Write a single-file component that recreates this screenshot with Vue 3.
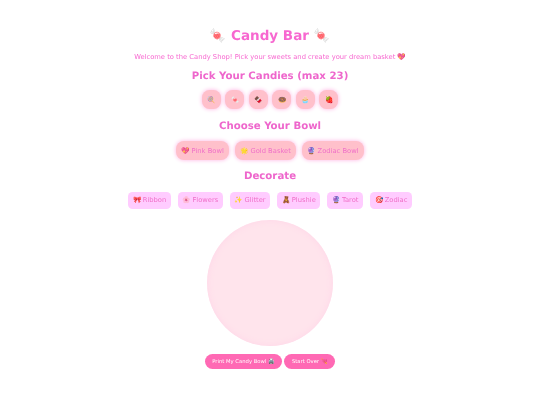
<script setup>
const candies = ['🍭', '🍬', '🍫', '🍩', '🧁', '🍓']
const bowls = ['💖 Pink Bowl', '🌟 Gold Basket', '🔮 Zodiac Bowl']
const decorations = ['🎀 Ribbon', '🌸 Flowers', '✨ Glitter', '🧸 Plushie', '🔮 Tarot', '🎯 Zodiac']
</script>

<template>
  <main class="page">
    <h1 class="title">🍬 Candy Bar 🍬</h1>
    <p class="intro">Welcome to the Candy Shop! Pick your sweets and create your dream basket 💖</p>
    <h2 class="heading">Pick Your Candies (max 23)</h2>
    <div class="candies">
      <button v-for="c in candies" :key="c" class="candy">{{ c }}</button>
    </div>
    <h2 class="heading bowl-heading">Choose Your Bowl</h2>
    <div class="bowls">
      <button v-for="b in bowls" :key="b" class="bowl-btn">{{ b }}</button>
    </div>
    <h2 class="heading deco-heading">Decorate</h2>
    <div class="decos">
      <button v-for="d in decorations" :key="d" class="deco">{{ d }}</button>
    </div>
    <div class="bowl"></div>
    <div class="actions">
      <button class="action">Print My Candy Bowl 🖨️</button>
      <button class="action">Start Over 💘</button>
    </div>
  </main>
</template>

<style>
body { margin: 0; background: #fff; }
</style>

<style scoped>
.page {
  width: 540px;
  height: 405px;
  box-sizing: border-box;
  padding-top: 25.5px;
  display: flex;
  flex-direction: column;
  align-items: center;
  font-family: "DejaVu Sans", sans-serif;
  text-rendering: geometricPrecision;
  filter: blur(0.3px);
  overflow: hidden;
}
.title { margin: 0; font-size: 13.5px; line-height: 20px; font-weight: 700; color: #f768d0; }
.intro { margin: 6px 0 0; font-size: 6.75px; line-height: 10px; color: #f768d0; }
.heading { margin: 8px 0 0; font-size: 10.2px; line-height: 14px; font-weight: 700; color: #ee66cc; }
button { font-family: inherit; border: none; padding: 0; color: #f070c8; }
.candies { display: flex; gap: 4.5px; margin-top: 6.5px; }
.candy {
  width: 19px; height: 19px; border-radius: 7.5px;
  background: #ffc0cb; box-shadow: 0 0 4px #ffb0e2; font-size: 6.75px;
}
.bowl-heading { margin-top: 10.5px; }
.bowls { display: flex; gap: 6px; margin-top: 7.5px; }
.bowl-btn {
  height: 19px; padding: 0 5.25px; border-radius: 8px;
  background: #ffc0cb; box-shadow: 0 0 4px #ffb0e2; font-size: 6.75px;
}
.deco-heading { margin-top: 9.5px; }
.decos { display: flex; gap: 7px; margin-top: 8px; }
.deco {
  height: 17px; padding: 0 4.5px; border-radius: 4.5px;
  background: #ffccff; font-size: 6.75px;
}
.bowl {
  width: 126px; height: 126px; margin-top: 11px; border-radius: 50%;
  background: #ffe4ec; box-shadow: inset 0 0 7.5px #ffd6e8;
}
.actions { display: flex; gap: 2px; margin-top: 8px; }
.action {
  height: 15.5px; padding: 0 7.5px; border-radius: 8px;
  background: #ff69b4; color: #fff; font-size: 5.25px;
}
</style>
